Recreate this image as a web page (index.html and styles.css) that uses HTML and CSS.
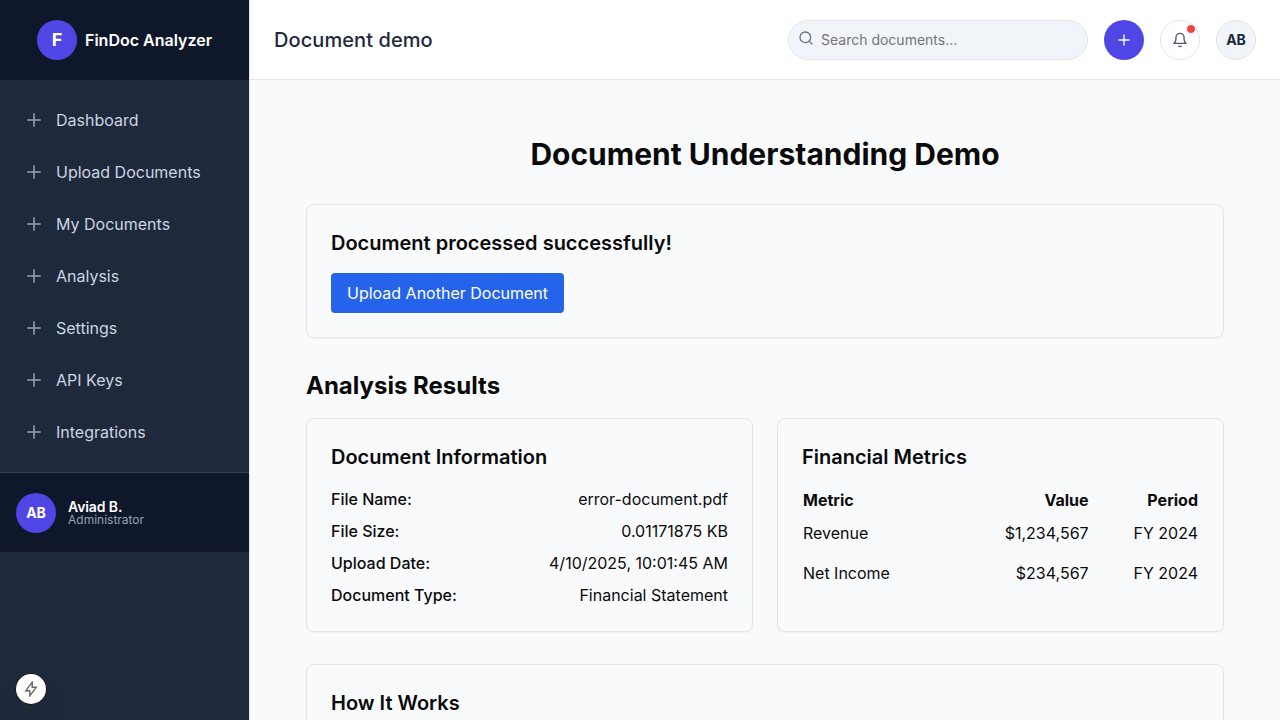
FILE: index.html
```html
<!DOCTYPE html>
<html lang="en">
<head>
<meta charset="utf-8">
<title>Document demo</title>
<link rel="stylesheet" href="styles.css">
</head>
<body>
<svg class="defs" width="0" height="0">
  <symbol id="plus" viewBox="0 0 24 24"><path d="M12 4.5v15m7.5-7.5h-15"/></symbol>
</svg>
<div class="app">
  <aside class="sidebar">
    <div class="brand"><span class="avatar logo">F</span><span class="brand-name">FinDoc Analyzer</span></div>
    <nav class="nav">
      <a class="nav-item"><svg class="icon"><use href="#plus"/></svg>Dashboard</a>
      <a class="nav-item"><svg class="icon"><use href="#plus"/></svg>Upload Documents</a>
      <a class="nav-item"><svg class="icon"><use href="#plus"/></svg>My Documents</a>
      <a class="nav-item"><svg class="icon"><use href="#plus"/></svg>Analysis</a>
      <a class="nav-item"><svg class="icon"><use href="#plus"/></svg>Settings</a>
      <a class="nav-item"><svg class="icon"><use href="#plus"/></svg>API Keys</a>
      <a class="nav-item"><svg class="icon"><use href="#plus"/></svg>Integrations</a>
    </nav>
    <div class="user">
      <span class="avatar">AB</span>
      <div class="user-text"><span class="user-name">Aviad B.</span><span class="user-role">Administrator</span></div>
    </div>
  </aside>
  <div class="main">
    <header class="header">
      <div class="page-name">Document demo</div>
      <div class="actions">
        <div class="search">
          <svg class="search-icon" viewBox="0 0 24 24"><circle cx="11" cy="11" r="8"/><path d="m21 21-4.35-4.35"/></svg>
          <input class="search-input" type="text" placeholder="Search documents...">
        </div>
        <button class="round add"><svg class="small-icon"><use href="#plus"/></svg></button>
        <button class="round bell"><svg class="small-icon" viewBox="0 0 24 24"><path d="M18 8A6 6 0 0 0 6 8c0 7-3 9-3 9h18s-3-2-3-9"/><path d="M13.73 21a2 2 0 0 1-3.46 0"/></svg><span class="dot"></span></button>
        <button class="round profile">AB</button>
      </div>
    </header>
    <main class="content">
      <h1 class="title">Document Understanding Demo</h1>
      <section class="card notice">
        <h2 class="card-title">Document processed successfully!</h2>
        <button class="upload">Upload Another Document</button>
      </section>
      <h2 class="section-title">Analysis Results</h2>
      <div class="results">
        <section class="card">
          <h3 class="card-title">Document Information</h3>
          <div class="info">
            <div class="row"><span class="label">File Name:</span><span>error-document.pdf</span></div>
            <div class="row"><span class="label">File Size:</span><span>0.01171875 KB</span></div>
            <div class="row"><span class="label">Upload Date:</span><span>4/10/2025, 10:01:45 AM</span></div>
            <div class="row"><span class="label">Document Type:</span><span>Financial Statement</span></div>
          </div>
        </section>
        <section class="card">
          <h3 class="card-title">Financial Metrics</h3>
          <table class="metrics">
            <thead><tr><th>Metric</th><th>Value</th><th>Period</th></tr></thead>
            <tbody>
              <tr><td>Revenue</td><td>$1,234,567</td><td>FY 2024</td></tr>
              <tr><td>Net Income</td><td>$234,567</td><td>FY 2024</td></tr>
            </tbody>
          </table>
        </section>
      </div>
      <section class="card how"><h2 class="card-title">How It Works</h2></section>
    </main>
  </div>
</div>
<div class="float"><svg class="bolt" viewBox="0 0 16 16"><path d="M9.2 1.2 2.8 9.7H6.8V14.8L13.2 6.3H9.2Z"/></svg></div>
</body>
</html>
```
FILE: styles.css
```css
* { box-sizing: border-box; }
body { margin: 0; height: 720px; overflow: hidden; font: 16px/24px Inter, "Liberation Sans", sans-serif; color: #0a0a0a; background: #f9fafc; }
h1, h2, h3 { margin: 0; }
button { font-family: inherit; border: 0; padding: 0; }
svg { fill: none; stroke: currentColor; stroke-width: 2; stroke-linecap: round; stroke-linejoin: round; flex: none; }
.defs { position: absolute; }
.app { display: flex; height: 720px; overflow: hidden; }
.sidebar { width: 250px; flex: none; background: #1e293b; border-right: 1px solid #e5e5e5; }
.brand { height: 80px; display: flex; align-items: center; justify-content: center; gap: 8px; background: #0f172a; color: #fff; font-weight: 600; }
.avatar { width: 40px; height: 40px; border-radius: 50%; background: #4f46e5; color: #fff; display: flex; align-items: center; justify-content: center; font-size: 14px; font-weight: 700; flex: none; }
.logo { font-size: 18px; }
.nav { padding: 14px 8px; display: flex; flex-direction: column; }
.nav-item { height: 52px; padding: 0 16px; display: flex; align-items: center; gap: 12px; color: #cbd5e1; }
.icon { width: 20px; height: 20px; color: #94a3b8; stroke-width: 1.8; }
.user { height: 80px; padding: 0 16px; display: flex; align-items: center; gap: 12px; background: #0f172a; border-top: 1px solid #334155; }
.user-text { display: flex; flex-direction: column; }
.user-name { color: #fff; font-size: 14px; line-height: 14px; font-weight: 600; letter-spacing: -.1px; }
.user-role { color: #94a3b8; font-size: 12px; line-height: 12px; }
.main { flex: 1; min-width: 0; }
.header { height: 80px; padding: 0 24px; background: #fff; border-bottom: 1px solid #e5e5e5; display: flex; align-items: center; justify-content: space-between; }
.page-name { font-size: 20px; font-weight: 500; letter-spacing: .08px; color: #1e293b; }
.actions { display: flex; gap: 16px; }
.search { width: 300px; height: 40px; border: 1px solid #e5e5e5; border-radius: 20px; background: #f1f5f9; display: flex; align-items: center; padding: 0 16px 0 9px; gap: 7px; }
.search-icon { width: 16px; height: 16px; color: #64748b; margin-bottom: 4px; }
.search-input { border: 0; padding: 0; outline: 0; background: none; flex: 1; min-width: 0; font: 14px Inter, sans-serif; }
.search-input::placeholder { color: #757575; }
.round { position: relative; width: 40px; height: 40px; border-radius: 50%; display: flex; align-items: center; justify-content: center; }
.small-icon { width: 16px; height: 16px; }
.add { background: #4f46e5; color: #fff; }
.bell { background: #fff; border: 1px solid #e5e5e5; color: #475569; }
.dot { position: absolute; top: 3px; right: 3px; width: 10px; height: 10px; border: 1px solid #fff; border-radius: 50%; background: #ef4444; }
.profile { background: #f1f5f9; border: 1px solid #e5e5e5; color: #1e293b; font-size: 14px; font-weight: 700; }
.content { padding: 56px 56px 0; }
.title { font-size: 30px; line-height: 36px; font-weight: 700; text-align: center; margin-bottom: 32px; }
.card { border: 1px solid #e5e5e5; border-radius: 8px; padding: 24px; box-shadow: 0 1px 2px rgba(0,0,0,.05); }
.card-title { font-size: 20px; line-height: 28px; font-weight: 600; margin-bottom: 16px; }
.upload { height: 40px; padding: 0 16px; border-radius: 4px; background: #2563eb; color: #fff; font-size: 16px; }
.notice { height: 134px; }
.section-title { font-size: 24px; line-height: 32px; font-weight: 700; margin: 32px 0 16px; }
.results { display: grid; grid-template-columns: 1fr 1fr; gap: 24px; }
.info { display: flex; flex-direction: column; gap: 8px; }
.row { display: flex; justify-content: space-between; }
.label { font-weight: 500; }
.metrics { width: 100%; border-collapse: separate; border-spacing: 0; }
.metrics th, .metrics td { padding: 8px 1px; text-align: right; }
.metrics th { padding: 1px; font-weight: 700; }
.metrics th:first-child, .metrics td:first-child { text-align: left; }
.how { margin-top: 32px; }
.float { position: absolute; left: 16px; top: 674px; width: 30px; height: 30px; border-radius: 50%; background: #fff; color: #666; display: flex; align-items: center; justify-content: center; box-shadow: 0 0 0 1px #171717, 0 0 0 1px rgba(255,255,255,.2), 0 16px 32px -8px rgba(0,0,0,.24); }
.bolt { width: 16px; height: 16px; stroke-width: 1.4; stroke-linejoin: miter; }
```
